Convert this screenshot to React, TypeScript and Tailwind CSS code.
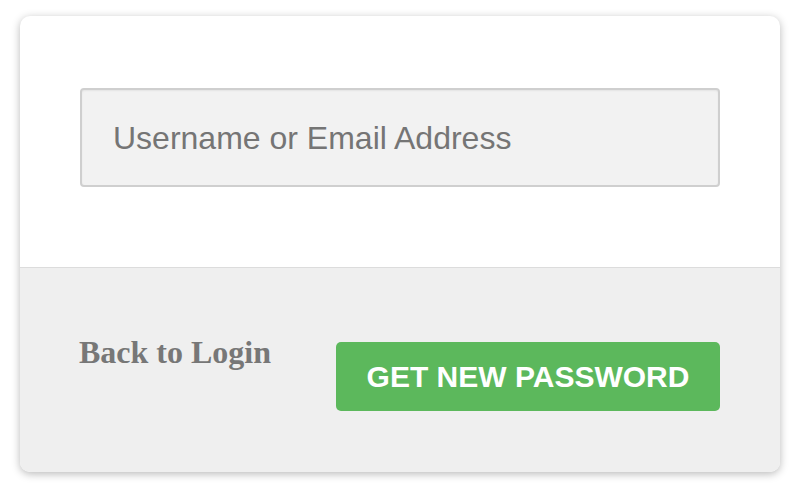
import React from 'react';

export default function App() {
  return (
    <div className="w-[798px] h-[490px] bg-white pt-4 px-5">
      <div className="w-[760px] h-[456px] rounded-[10px] bg-white shadow-[0_2px_8px_rgba(0,0,0,0.28)] overflow-hidden flex flex-col">
        {/* top: input */}
        <div className="h-[252px] pt-[72px] px-[60px] border-b border-[#dcdcdc]">
          <input
            type="text"
            placeholder="Username or Email Address"
            className="w-[640px] h-[99px] rounded-[4px] border-2 border-[#cfcfcf] bg-[#f2f2f2] pl-[31px] pt-[2px] text-[32px] text-[#777] placeholder:text-[#757575] shadow-[inset_0_1px_2px_rgba(0,0,0,0.06)] outline-none"
            style={{ fontFamily: '"Liberation Sans", Arial, sans-serif' }}
          />
        </div>
        {/* bottom: actions */}
        <div className="flex-1 bg-[#efefef] flex justify-between items-start pl-[59px] pr-[60px] pt-[64px]">
          <a
            href="#"
            className="text-[32px] font-bold text-[#777] leading-[40px]"
            style={{ fontFamily: '"Liberation Serif", "DejaVu Serif", serif' }}
          >
            Back to Login
          </a>
          <button
            className="w-[384px] h-[69px] mt-[10px] rounded-[5px] bg-[#5cb85c] text-white text-[30px] font-bold"
            style={{ fontFamily: '"Liberation Sans", Arial, sans-serif' }}
          >
            GET NEW PASSWORD
          </button>
        </div>
      </div>
    </div>
  );
}
